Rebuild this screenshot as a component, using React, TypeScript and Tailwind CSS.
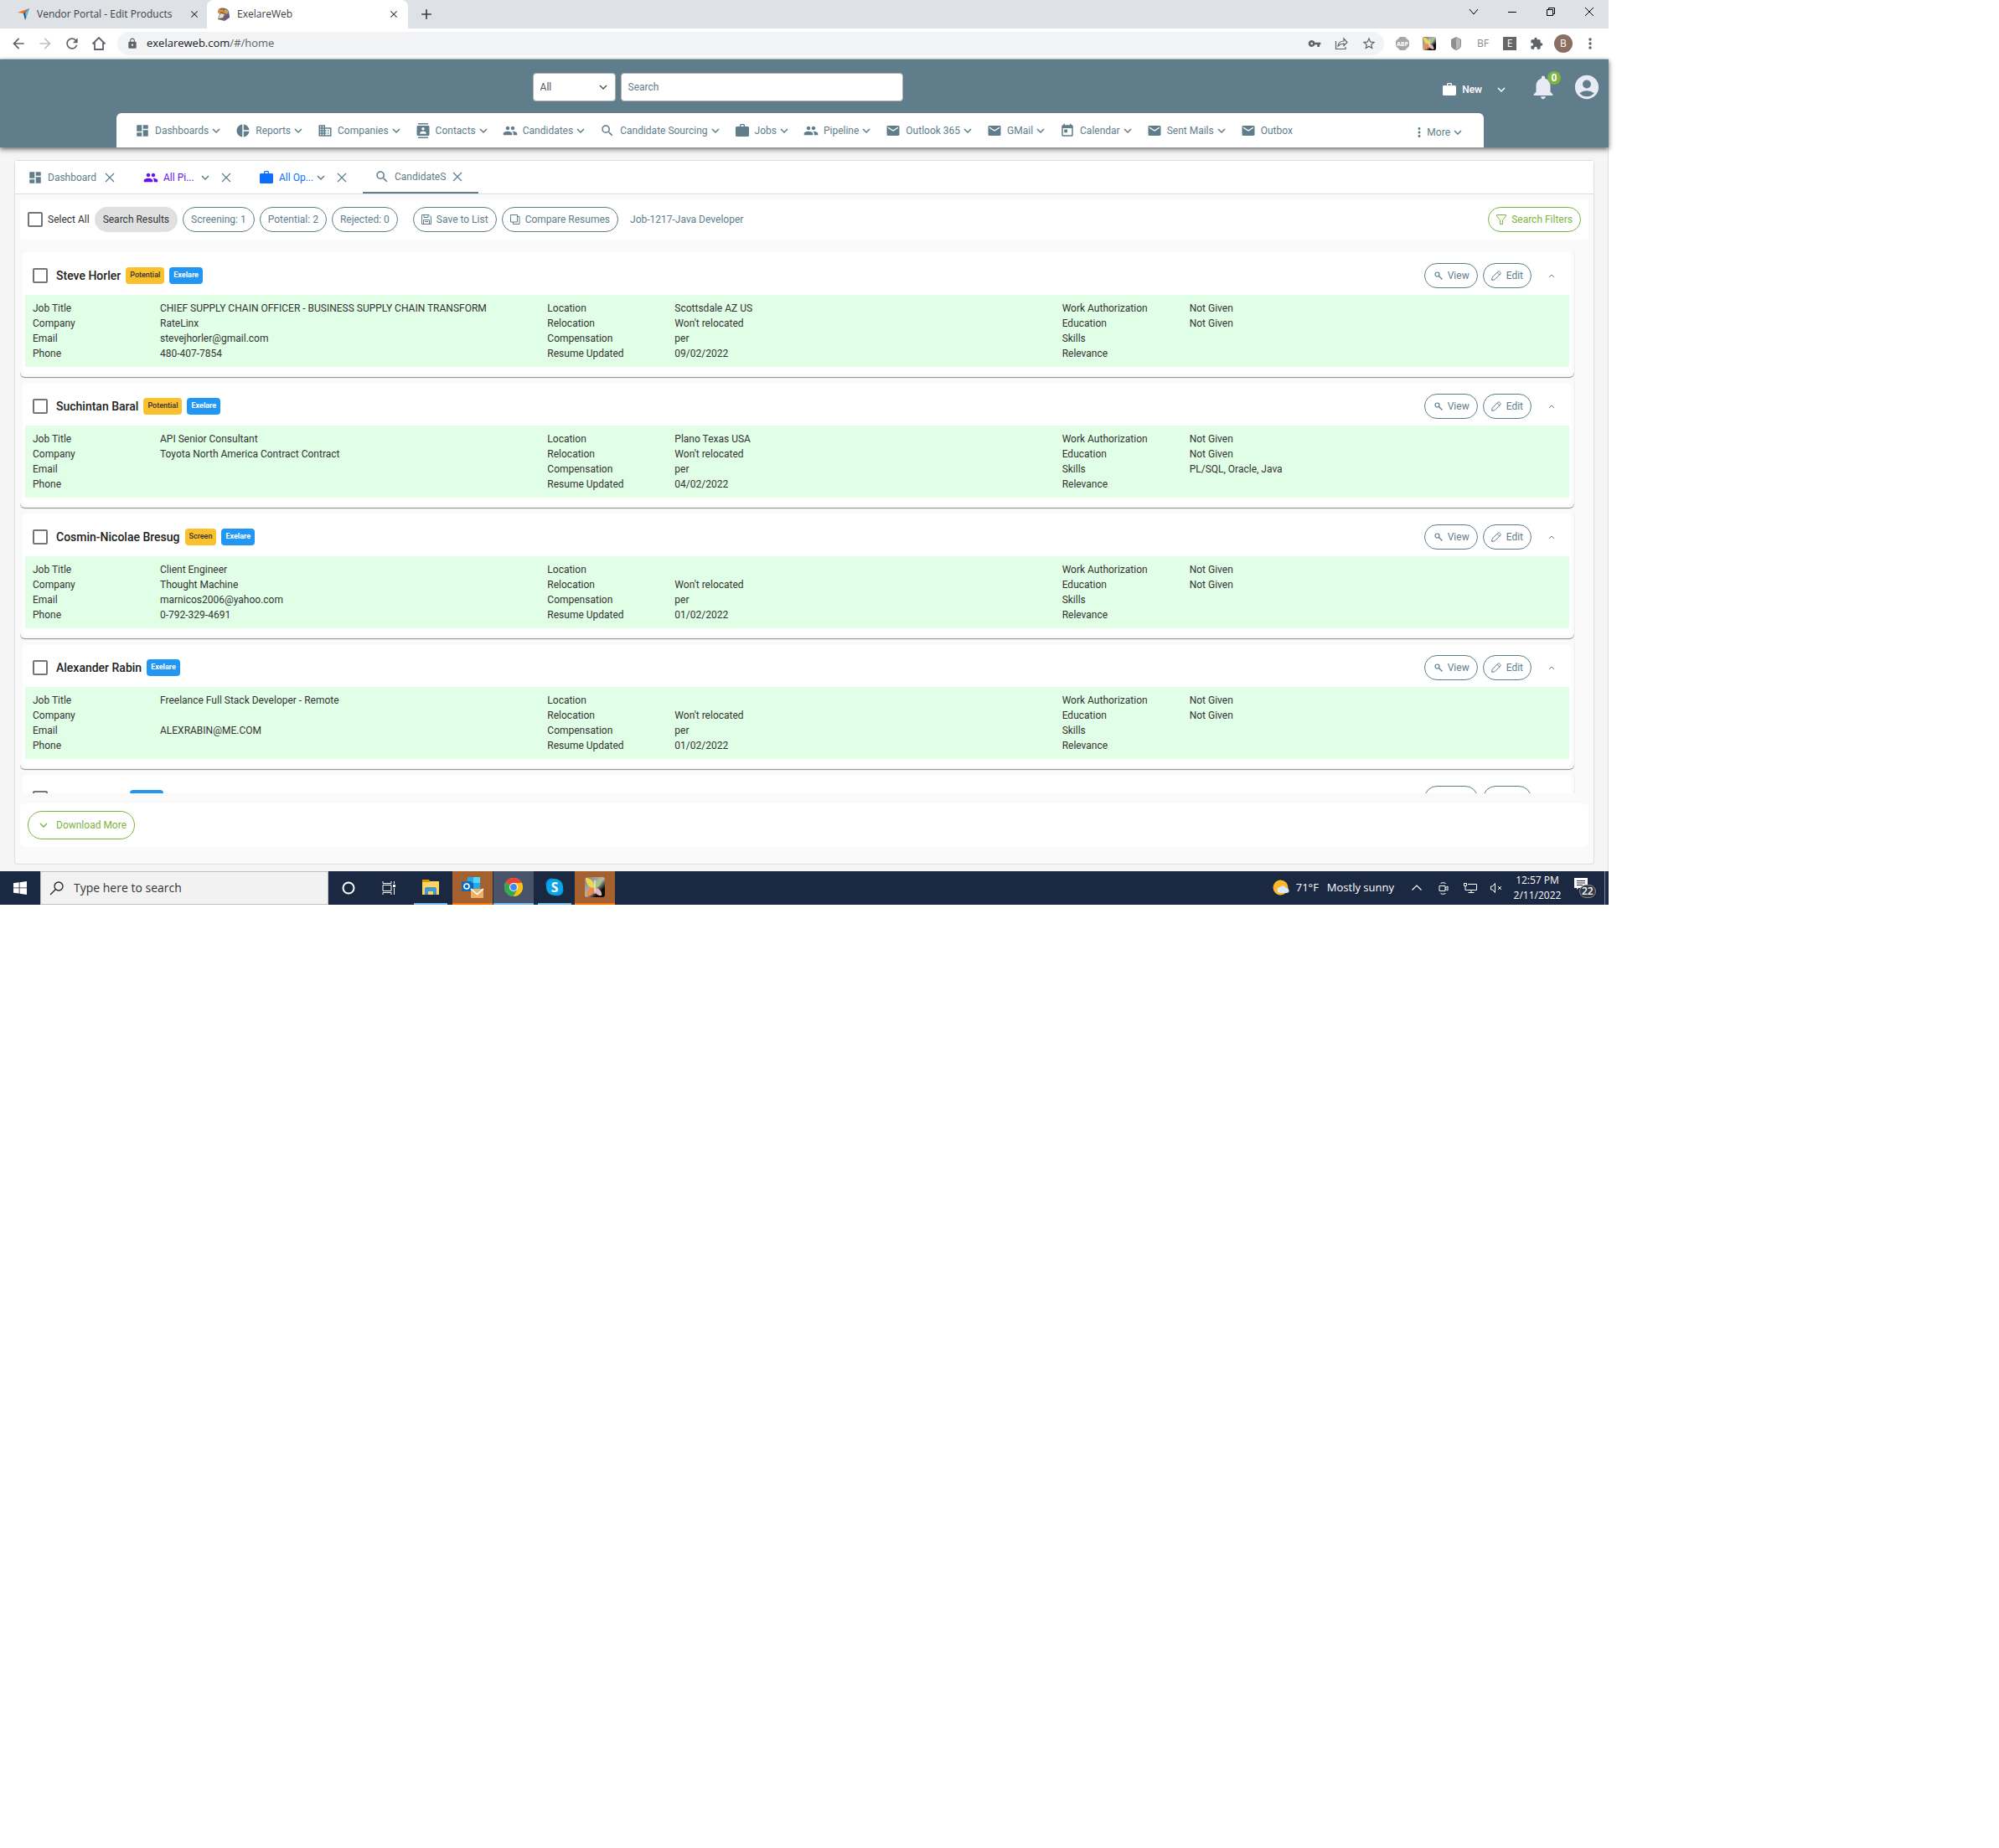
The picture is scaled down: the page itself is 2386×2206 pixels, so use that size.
import React from 'react';
import {
  MdDashboard, MdPieChart, MdBusiness, MdContacts, MdPeople, MdSearch, MdEmail, MdToday, MdMoreVert,
  MdNotifications, MdAccountCircle, MdKeyboardArrowDown, MdLock, MdVpnKey, MdStarBorder, MdExtension,
  MdArrowBack, MdArrowForward, MdRefresh, MdClose, MdAdd,
} from 'react-icons/md';
import type { IconType } from 'react-icons';

interface Candidate {
  name: string;
  status?: string;
  details: [string, string][][];
}

const makeDetails = (first: string[], location: string, updated: string, skills = ''): [string, string][][] => [
  [['Job Title', first[0]], ['Company', first[1]], ['Email', first[2]], ['Phone', first[3]]],
  [['Location', location], ['Relocation', "Won't relocated"], ['Compensation', 'per'], ['Resume Updated', updated]],
  [['Work Authorization', 'Not Given'], ['Education', 'Not Given'], ['Skills', skills], ['Relevance', '']],
];

const candidates: Candidate[] = [
  {
    name: 'Steve Horler',
    status: 'Potential',
    details: makeDetails(
      ['CHIEF SUPPLY CHAIN OFFICER - BUSINESS SUPPLY CHAIN TRANSFORM', 'RateLinx', 'stevejhorler@gmail.com', '480-407-7854'],
      'Scottsdale AZ US', '09/02/2022',
    ),
  },
  {
    name: 'Suchintan Baral',
    status: 'Potential',
    details: makeDetails(['API Senior Consultant', 'Toyota North America Contract Contract', '', ''], 'Plano Texas USA', '04/02/2022', 'PL/SQL, Oracle, Java'),
  },
  {
    name: 'Cosmin-Nicolae Bresug',
    status: 'Screen',
    details: makeDetails(['Client Engineer', 'Thought Machine', 'marnicos2006@yahoo.com', '0-792-329-4691'], '', '01/02/2022'),
  },
  {
    name: 'Alexander Rabin',
    details: makeDetails(['Freelance Full Stack Developer - Remote', '', 'ALEXRABIN@ME.COM', ''], '', '01/02/2022'),
  },
];

function BriefcaseIcon({ className }: { className?: string }) {
  return (
    <svg viewBox="0 0 18 18" className={className} fill="currentColor">
      <path d="M6 4V2.500C6 1.700 6.700 1 7.500 1h3c.8 0 1.500.7 1.500 1.500V4h3.500c.8 0 1.500.7 1.500 1.500v9c0 .8-.7 1.500-1.500 1.500h-13C1.700 16 1 15.300 1 14.500v-9C1 4.700 1.700 4 2.500 4H6zm1.300 0h3.400V2.300H7.300V4z" />
    </svg>
  );
}

const navItems: { label: string; icon: IconType | typeof BriefcaseIcon; menu?: boolean }[] = [
  { label: 'Dashboards', icon: MdDashboard, menu: true },
  { label: 'Reports', icon: MdPieChart, menu: true },
  { label: 'Companies', icon: MdBusiness, menu: true },
  { label: 'Contacts', icon: MdContacts, menu: true },
  { label: 'Candidates', icon: MdPeople, menu: true },
  { label: 'Candidate Sourcing', icon: MdSearch, menu: true },
  { label: 'Jobs', icon: BriefcaseIcon, menu: true },
  { label: 'Pipeline', icon: MdPeople, menu: true },
  { label: 'Outlook 365', icon: MdEmail, menu: true },
  { label: 'GMail', icon: MdEmail, menu: true },
  { label: 'Calendar', icon: MdToday, menu: true },
  { label: 'Sent Mails', icon: MdEmail, menu: true },
  { label: 'Outbox', icon: MdEmail },
];

function ThinX({ className }: { className?: string }) {
  return (
    <svg viewBox="0 0 12 12" className={className} stroke="currentColor" strokeWidth="1.2" fill="none">
      <path d="M1 1l10 10M11 1L1 11" />
    </svg>
  );
}

function ExelareLogo({ className }: { className?: string }) {
  return (
    <svg viewBox="0 0 24 24" className={className}>
      <defs>
        <linearGradient id="exelare-bg" x1="0" y1="0" x2="1" y2="1">
          <stop offset="0.1" stopColor="#8a8580" />
          <stop offset="0.5" stopColor="#bdb8b4" />
          <stop offset="0.75" stopColor="#0c0c0c" />
        </linearGradient>
      </defs>
      <rect width="24" height="24" rx="3" fill="url(#exelare-bg)" />
      <path d="M1 1c7 0 10 5 11 12C5 13 1 8 1 1z" fill="#f2d64a" />
      <path d="M20 1c-5 2-8 6-8 12 6-1 9-6 8-12z" fill="#9fc97a" />
      <path d="M2 22c-1-6 4-10 10-9 0 7-4 10-10 9z" fill="#ee8a4a" />
      <path d="M20 22c1-5-3-9-8-9-1 5 3 10 8 9z" fill="#e3b3bd" />
      <path d="M12 4v16" stroke="#fff" />
    </svg>
  );
}

function BrowserBar() {
  return (
    <div className="font-['Open_Sans',sans-serif] text-[#3c4043]">
      <div className="flex h-[34px] items-stretch bg-[#dee1e6] text-xs">
        <div className="flex w-[247px] items-center pl-5 pr-1">
          <svg viewBox="0 0 16 16" className="mr-2 size-4 shrink-0">
            <path d="M1 6l14-5-6 6z" fill="#f2711c" />
            <path d="M15 1L10 15 8 7z" fill="#12507b" />
            <path d="M15 1l-4 12-1-7z" fill="#5cc3e8" />
          </svg>
          <span className="flex-1 whitespace-nowrap">Vendor Portal - Edit Products</span>
          <button aria-label="Close tab" className="px-1"><MdClose className="size-3.5" /></button>
        </div>
        <div className="flex w-[240px] items-center rounded-t-lg bg-white pl-3 pr-1.5">
          <svg viewBox="0 0 16 16" className="mr-2 size-4 shrink-0">
            <path d="M2 2c5-3 10-1 12 2l1 8-6 4-8-2 2-6z" fill="#6f6a5e" />
            <path d="M1 3c5-2 8 0 9 4L6 5 1 7z" fill="#f08a2b" />
            <path d="M4 7l5 1-2 4-5 1z" fill="#e6dfcf" />
            <path d="M9 12l5-5 1 4-5 4z" fill="#7a4a9b" />
            <path d="M9 2l5 2-2 4-3-2z" fill="#c9a35f" />
          </svg>
          <span className="flex-1">ExelareWeb</span>
          <button aria-label="Close tab" className="px-1"><MdClose className="size-3.5" /></button>
        </div>
        <button aria-label="New tab" className="px-3"><MdAdd className="size-5" /></button>
        <div className="ml-auto flex items-center gap-8 pb-1.5 pr-4 text-black">
          <svg viewBox="0 0 14 14" className="size-3.5" fill="none" stroke="currentColor"><path d="M2 4l5 6 5-6" /></svg>
          <svg viewBox="0 0 14 14" className="size-3.5" fill="none" stroke="currentColor"><path d="M2 7.500h10" /></svg>
          <svg viewBox="0 0 14 14" className="size-3.5" fill="none" stroke="currentColor"><path d="M2.500 4.500h7v7h-7zM4.500 4.500v-2h7v7h-2" /></svg>
          <svg viewBox="0 0 14 14" className="size-3.5" fill="none" stroke="currentColor"><path d="M2 2l10 10M12 2L2 12" /></svg>
        </div>
      </div>
      <div className="flex h-[37px] items-center border-b border-[#d5d8dc] bg-white pl-3 pr-1.5 text-[#5f6368]">
        <div className="flex w-32 items-center gap-3">
          <MdArrowBack className="size-5" />
          <MdArrowForward className="size-5 text-[#bdc1c6]" />
          <MdRefresh className="size-5" />
          <svg viewBox="0 0 20 20" className="size-5" fill="none" stroke="currentColor" strokeWidth="1.8"><path d="M2.500 10.500L10 3l7.500 7.500M5 9v8h10V9" /></svg>
        </div>
        <div className="flex h-7 flex-1 items-center rounded-full bg-[#f1f3f4] pl-[11px] pr-[9px]">
          <MdLock className="mr-2.5 size-3.5" />
          <span className="flex-1 text-[13px]"><span className="text-[#202124]">exelareweb.com</span>/#/home</span>
          <MdVpnKey className="mr-4 size-4" />
          <svg viewBox="0 0 16 16" className="mr-4 size-4" fill="none" stroke="currentColor" strokeWidth="1.2">
            <path d="M1.500 5v9.500H13V12M4 11c.5-4 3-6 7-6V2l4 4.500-4 4V8C8 8 6 9 4 11z" />
          </svg>
          <MdStarBorder className="size-[18px]" />
        </div>
        <div className="grid grid-cols-[repeat(8,32px)] items-center justify-items-center pl-1.5">
          <svg viewBox="0 0 16 16" className="size-4">
            <path d="M5 0h6l5 5v6l-5 5H5l-5-5V5z" fill="#a7a7a7" />
            <text x="8" y="11" textAnchor="middle" fontSize="7" fontWeight="700" fill="#fff">ABP</text>
          </svg>
          <ExelareLogo className="size-4" />
          <svg viewBox="0 0 16 16" className="size-4"><path d="M8 0l6 3v7c0 3-3 5-6 6-3-1-6-3-6-6V3z" fill="#8f8f8f" /><path d="M8 1l5 2.500V10c0 2-2 4-5 5z" fill="#b8b8b8" /></svg>
          <span className="text-xs leading-4 text-[#8a8a8a]">BF</span>
          <span className="flex size-4 items-center justify-center bg-[#666] text-xs text-white">E</span>
          <MdExtension className="size-4" />
          <span className="flex size-[22px] items-center justify-center rounded-full bg-[#8d6e63] text-xs text-white">B</span>
          <MdMoreVert className="size-5" />
        </div>
      </div>
    </div>
  );
}

function Header() {
  return (
    <header className="relative z-10 flex h-[105px] flex-col bg-[#607d8b] shadow-[0_2px_6px_rgba(0,0,0,0.6)]">
      <div className="grid flex-1 grid-cols-[33%_auto_1fr] items-center pt-0.5">
        <div />
        <div className="ml-0.5 flex gap-1.5">
          <div className="relative">
            <select aria-label="Search scope" className="h-[34px] w-[99px] appearance-none rounded-sm border border-[#b0b0b0] bg-white px-2 text-xs text-[#555]">
              <option>All</option>
            </select>
            <MdKeyboardArrowDown className="pointer-events-none absolute right-1.5 top-2 size-[18px] text-[#555]" />
          </div>
          <input aria-label="Search" placeholder="Search" className="h-[34px] w-[337px] rounded-sm border border-[#b0b0b0] bg-white px-2 text-xs placeholder:text-[#607d8b]" />
        </div>
        <div className="flex items-center justify-end pr-[9px] text-white">
          <button className="mr-6 flex items-center pt-1.5 text-xs font-medium">
            <BriefcaseIcon className="mr-1.5 size-[18px]" />New
            <MdKeyboardArrowDown className="ml-3.5 size-[18px]" />
          </button>
          <button aria-label="Notifications" className="relative mr-[18px]">
            <MdNotifications className="size-[34px] text-[#e8eaf6]" />
            <span className="absolute -right-1 -top-0.5 flex size-4 items-center justify-center rounded-full bg-[#7cb342] text-xs font-bold leading-4">0</span>
          </button>
          <button aria-label="Account"><MdAccountCircle className="size-[34px] text-[#e8eaf6]" /></button>
        </div>
      </div>
      <nav className="ml-[139px] mr-[149px] flex h-[41px] items-center rounded-t-md bg-white px-[22px] text-xs text-[#607d8b]">
        <div className="flex gap-3.5">
          {navItems.map(({ label, icon: Icon, menu }) => (
            <a key={label} href="#" className="flex items-center whitespace-nowrap">
              <Icon className="mr-1.5 size-[18px]" />
              {label}
              {menu && <MdKeyboardArrowDown className="size-[18px]" />}
            </a>
          ))}
        </div>
        <button className="ml-auto flex items-center pt-1"><MdMoreVert className="size-[18px]" />More<MdKeyboardArrowDown className="size-[18px]" /></button>
      </nav>
    </header>
  );
}

function PanelTabs() {
  return (
    <div className="flex h-10 items-stretch border-b border-[#dddddd] bg-white pl-px text-xs text-[#607d8b]">
      <div className="flex w-[138px] items-center pl-3.5"><MdDashboard className="mr-1.5 size-[18px]" />Dashboard<ThinX className="ml-2.5 size-3" /></div>
      <div className="flex w-[138px] items-center pl-3.5 text-[#6610f2]">
        <MdPeople className="mr-1.5 size-[18px]" />All Pi...
        <MdKeyboardArrowDown className="ml-1 size-[18px] text-[#607d8b]" /><ThinX className="ml-2.5 size-3 text-[#607d8b]" />
      </div>
      <div className="flex w-[138px] items-center pl-3.5 text-[#0d6efd]">
        <BriefcaseIcon className="mr-1.5 size-[18px]" />All Op...
        <MdKeyboardArrowDown className="size-[18px] text-[#607d8b]" /><ThinX className="ml-2.5 size-3 text-[#607d8b]" />
      </div>
      <div className="flex w-[138px] items-center border-b-2 border-[#607d8b] pl-3.5"><MdSearch className="mr-1.5 size-[18px]" />CandidateS<ThinX className="ml-2 size-3" /></div>
    </div>
  );
}

function Checkbox({ label }: { label: string }) {
  return <input type="checkbox" aria-label={label} className="size-[18px] shrink-0 appearance-none rounded-xs border-2 border-[#757575] bg-white" />;
}

const pill = 'flex h-[30px] items-center whitespace-nowrap rounded-full border border-[#607d8b] px-[9px] text-xs text-[#607d8b]';

function Toolbar() {
  return (
    <div className="flex h-12 items-center gap-1.5 rounded-sm bg-white px-[9px] text-xs text-[#607d8b]">
      <label className="flex items-center gap-1.5 text-[#333]"><Checkbox label="Select All" />Select All</label>
      <button className="flex h-[30px] items-center rounded-full bg-[#e0e0e0] px-2.5 text-[#333]">Search Results</button>
      <button className={pill}>Screening: 1</button>
      <button className={pill}>Potential: 2</button>
      <button className={pill}>Rejected: 0</button>
      <button className={`${pill} ml-3`}>
        <svg viewBox="0 0 12 12" className="mr-1.5 size-3" fill="none" stroke="currentColor"><path d="M.5.500h8.500l2.500 2.500v8.500H.5zM3 .5v3h5v-3M2.500 11.500v-5h7v5M4 8.500h4" /></svg>
        Save to List
      </button>
      <button className={pill}>
        <svg viewBox="0 0 12 12" className="mr-1.5 size-3" fill="none" stroke="currentColor"><path d="M.5.500h8v8.500h-8zM8.500 2.500h2.500v9H3.500v-2.500" /></svg>
        Compare Resumes
      </button>
      <span className="ml-2">Job-1217-Java Developer</span>
      <button className={`${pill} ml-auto border-[#7cb342]! text-[#7cb342]!`}>
        <svg viewBox="0 0 12 12" className="mr-1.5 size-3" fill="none" stroke="currentColor"><path d="M.5.500h11v1.500L7.500 6.500v5h-3v-5L.5 2z" /></svg>
        Search Filters
      </button>
    </div>
  );
}

function CandidateCard({ candidate }: { candidate: Candidate }) {
  return (
    <article className="mb-[3px] rounded-md bg-[#fafafa] px-[3px] pb-[3px] pt-1 shadow-[0_1px_1px_rgba(0,0,0,0.45)]">
      <div className="rounded-md bg-white px-[3px] pb-[9px]">
        <div className="flex h-[51px] items-center pb-px pl-[9px] pr-4 pt-1.5">
          <Checkbox label={`Select ${candidate.name}`} />
          <h2 className="ml-2.5 text-sm font-medium text-[#212121]">{candidate.name}</h2>
          {candidate.status && <span className="ml-1.5 flex h-5 items-center rounded-sm bg-[#fbc02d] px-[5px] text-[9px] font-medium text-[#333]">{candidate.status}</span>}
          <span className="ml-1.5 flex h-5 items-center rounded-sm bg-[#2196f3] px-[5px] text-[9px] font-bold text-white">Exelare</span>
          <button className={`${pill} ml-auto`}>
            <svg viewBox="0 0 14 14" className="mr-1 size-3.5" fill="none" stroke="currentColor" strokeWidth="1.2"><circle cx="5.5" cy="5.5" r="2.500" /><path d="M7.500 7.500l4 4" /></svg>
            View
          </button>
          <button className={`${pill} ml-1.5`}>
            <svg viewBox="0 0 12 12" className="mr-1.5 size-3" fill="none" stroke="currentColor"><path d="M.6 11.400l.6-3.400L8 1.200c1.200-1.200 4 1.400 2.800 2.800L4 10.800zM7 2.200l2.800 2.800" /></svg>
            Edit
          </button>
          <button aria-label="Collapse" className="ml-[19px]"><svg viewBox="0 0 10 10" className="size-2.5 text-[#777]" fill="none" stroke="currentColor"><path d="M2 7l3-3 3 3" /></svg></button>
        </div>
        <div className="grid grid-cols-3 bg-[#e1ffe6] py-[7px] text-xs leading-[18px] text-[#333]">
          {candidate.details.map((rows, i) => (
            <dl key={i} className="grid h-[72px] grid-cols-[152px_1fr] grid-rows-4 pl-[9px]">
              {rows.map(([term, value]) => (
                <React.Fragment key={term}><dt>{term}</dt><dd className="whitespace-nowrap">{value}</dd></React.Fragment>
              ))}
            </dl>
          ))}
        </div>
      </div>
    </article>
  );
}

function Taskbar() {
  return (
    <footer className="flex h-10 items-center bg-[#1b2842] font-['Open_Sans',sans-serif] text-white">
      <button aria-label="Start" className="flex w-12 justify-center">
        <svg viewBox="0 0 16 16" className="size-4" fill="currentColor"><path d="M0 2.300L6.700 1.300v6.200H0zM7.500 1.200L16 0v7.500H7.500zM0 8.300h6.700v6.300L0 13.700zM7.500 8.300H16V16l-8.500-1.200z" /></svg>
      </button>
      <label className="flex h-10 w-[344px] items-center border border-[#bfbfbf] bg-[#f2f2f2] pl-2.5 text-[#222]">
        <svg viewBox="0 0 18 18" className="mr-[11px] size-[18px]" fill="none" stroke="currentColor" strokeWidth="1.3"><circle cx="11" cy="7" r="5" /><path d="M7.500 10.500L1 17" /></svg>
        <input aria-label="Type here to search" placeholder="Type here to search" className="w-60 bg-transparent text-sm placeholder:text-[#333]" />
      </label>
      <div className="flex h-10 w-12 items-center justify-center"><svg viewBox="0 0 18 18" className="size-[18px]" fill="none" stroke="currentColor" strokeWidth="2"><circle cx="9" cy="9" r="6.5" /></svg></div>
      <div className="flex h-10 w-12 items-center justify-center">
        <svg viewBox="0 0 18 18" className="size-[18px]" fill="none" stroke="currentColor"><path d="M2 1v2.500h10V1M2 5.500h10v7H2zM2 17v-2.500h10V17M15.500 1v3M15.500 9v8" /><path d="M14 5h3v3h-3z" fill="currentColor" stroke="none" /></svg>
      </div>
      <div className="flex h-10 w-[52px] justify-center">
        <div className="flex w-10 items-center justify-center border-b-2 border-[#76b9ed]">
          <svg viewBox="0 0 24 20" className="h-5 w-6"><path d="M2 1h7l2 2h11v16H2z" fill="#ffd45e" /><path d="M2 1h8l1 3H2z" fill="#dd9a05" /><path d="M5 19v-7c0-1 .8-2 2-2h10c1.200 0 2 1 2 2v7h-4v-4H9v4z" fill="#3f97d6" /></svg>
        </div>
      </div>
      <div className="flex h-10 w-12 items-center justify-center border-b-2 border-[#ff7300] bg-[#a4602f]">
        <svg viewBox="0 0 28 28" className="size-7">
          <path d="M8 2h15v15H8z" fill="#28a8ea" /><path d="M15 2h8v7h-8z" fill="#50d9ff" /><path d="M8 9h7v8H8z" fill="#0364b8" />
          <rect x="1" y="7" width="12" height="12" rx="1" fill="#0f6cbd" />
          <circle cx="7" cy="13" r="3" fill="none" stroke="#fff" strokeWidth="1.6" />
          <path d="M12 16h15v11H12z" fill="#ecb267" /><path d="M12 16l7.500 6.500L27 16" fill="none" stroke="#fff" strokeWidth="1.6" />
        </svg>
      </div>
      <div className="ml-px flex h-10 w-12 items-center justify-center border-b-2 border-[#76b9ed] bg-[#49546b]">
        <svg viewBox="0 0 24 24" className="size-[22px]">
          <circle cx="12" cy="12" r="12" fill="#fbc116" />
          <path d="M12 12L1.600 6A12 12 0 0122.400 6z" fill="#ea4335" />
          <path d="M1.600 6A12 12 0 0012 24l5-9-5-3z" fill="#34a853" />
          <path d="M12 6.500h10.600A12 12 0 0112 24l5-9z" fill="#fbc116" />
          <circle cx="12" cy="12" r="5.5" fill="#fff" /><circle cx="12" cy="12" r="4.3" fill="#4285f4" />
        </svg>
      </div>
      <div className="flex h-10 w-[49px] justify-center">
        <div className="flex w-10 items-center justify-center border-b-2 border-[#76b9ed]">
          <svg viewBox="0 0 24 24" className="size-[22px]"><circle cx="8" cy="8" r="7.5" fill="#0c8ad8" /><circle cx="16" cy="16" r="7.5" fill="#0c8ad8" /><circle cx="12" cy="12" r="11" fill="#0ca5e8" /><text x="12" y="18" textAnchor="middle" fontSize="17" fontWeight="700" fill="#fff">S</text></svg>
        </div>
      </div>
      <div className="flex h-10 w-12 items-center justify-center border-b-2 border-[#ff7300] bg-[#a4602f]"><ExelareLogo className="size-6" /></div>
      <div className="ml-auto flex items-center">
        <svg viewBox="0 0 20 20" className="mr-2 size-5"><circle cx="9.5" cy="9.5" r="9" fill="#fdb827" /><path d="M9 16a3.500 3.500 0 010-7 4 4 0 017 1 3 3 0 011 6z" fill="#d7ebfb" /></svg>
        <span className="mr-2.5 text-[13px]">71°F</span>
        <span className="text-[13px]">Mostly sunny</span>
        <svg viewBox="0 0 14 14" className="ml-5 size-3.5" fill="none" stroke="currentColor" strokeWidth="1.2"><path d="M1.500 9.500L7 4l5.500 5.500" /></svg>
        <svg viewBox="0 0 16 16" className="ml-[17px] size-4" fill="none" stroke="currentColor"><path d="M3 5.500h7v6H3zM10 8l3-2v5l-3-2M4.500 2.500c2-1 4-1 6 0M4.500 14.500c2 1 4 1 6 0" /></svg>
        <svg viewBox="0 0 16 16" className="ml-4 size-4" fill="none" stroke="currentColor"><path d="M.5 2.500h3v3h-3zM2 5.500v5h13.500v-7H5M9 10.500v3M5.500 13.500h7" /></svg>
        <svg viewBox="0 0 16 16" className="ml-[15px] size-4" fill="none" stroke="currentColor"><path d="M1.500 6h2l3-3.500v11L3.500 10h-2zM10 6l4 4M14 6l-4 4" /></svg>
        <div className="ml-[11px] w-[60px] text-center text-xs leading-[18px]">12:57 PM<br />2/11/2022</div>
        <div className="relative ml-3.5 h-6 w-9">
          <svg viewBox="0 0 16 14" className="h-3.5 w-4" fill="currentColor"><path d="M0 0h16v12H5l-2 2v-2H0z" /><path d="M3 3.500h10M3 6h10M3 8.500h7" stroke="#1b2842" /></svg>
          <span className="absolute left-1.5 top-2 rounded-full border border-[#888] bg-[#333a46] px-0.5 text-xs font-semibold leading-[14px]">22</span>
        </div>
        <div className="h-10 w-[5px] border-l border-[#8089a0]" />
      </div>
    </footer>
  );
}

export default function App() {
  return (
    <div className="min-h-screen bg-white">
      <div className="w-full max-w-[1920px] font-[Roboto,sans-serif]">
        <BrowserBar />
        <Header />
        <main className="border-r border-[#ddd] bg-[#f5f5f5] pb-2 pl-[17px] pr-4 pt-[15px]">
          <section className="rounded-sm border border-[#dddddd] bg-[#fafafa] pb-5">
            <PanelTabs />
            <div className="px-1.5 pt-1.5">
              <Toolbar />
              {/* scrolling result list */}
              <div className="mt-[11px] h-[650px] overflow-hidden pr-[17px]">
                {candidates.map(c => <CandidateCard key={c.name} candidate={c} />)}
                <CandidateCard candidate={{ name: 'Robert Smith', details: [] }} />
              </div>
              <div className="mt-3 flex h-[52px] items-center rounded-md bg-white px-[9px]">
                <button className="flex h-[34px] items-center rounded-full border border-[#7cb342] px-[9px] text-xs text-[#7cb342]">
                  <MdKeyboardArrowDown className="mr-1.5 size-[18px]" />Download More
                </button>
              </div>
            </div>
          </section>
        </main>
        <Taskbar />
      </div>
    </div>
  );
}
